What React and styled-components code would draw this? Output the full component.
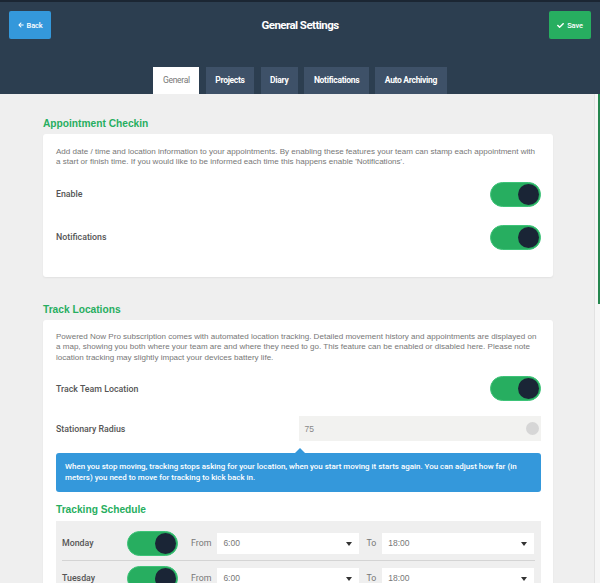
import React from 'react';
import styled, { createGlobalStyle } from 'styled-components';
import { FaArrowLeft, FaCheck } from 'react-icons/fa';

const GlobalStyle = createGlobalStyle`
  html, body {
    margin: 0;
    padding: 0;
    height: 100%;
    overflow: hidden;
  }
  body {
    font-family: "Liberation Sans", Arial, sans-serif;
    background: #efefef;
  }
  #root {
    height: 100%;
  }
`;

const Screen = styled.div`
  height: 100vh;
  display: flex;
  flex-direction: column;
`;

const Header = styled.header`
  flex: none;
  height: 94px;
  box-sizing: border-box;
  background: #2c3e50;
  border-top: 2px solid #1b2633;
  padding: 9px 9px 0;
  display: flex;
  flex-direction: column;
  font-family: Roboto, sans-serif;
`;

const TopBar = styled.div`
  display: flex;
  align-items: center;
  justify-content: space-between;
  height: 28px;
`;

const HeaderButton = styled.button`
  width: 42px;
  height: 28px;
  border: none;
  border-radius: 2px;
  background: ${(p) => p.$color};
  color: #fff;
  font-family: Roboto, sans-serif;
  font-size: 7.5px;
  font-weight: 500;
  letter-spacing: -0.2px;
  display: flex;
  align-items: center;
  justify-content: center;
  gap: 3px;
  padding: 0;
`;

const Title = styled.h1`
  margin: 0;
  color: #fff;
  font-size: 11.5px;
  font-weight: 700;
  letter-spacing: -0.55px;
`;

const Tabs = styled.nav`
  display: flex;
  justify-content: center;
  gap: 6.5px;
  margin-top: 28px;
  height: 27px;
`;

const Tab = styled.div`
  padding: 0 9.5px 2px;
  display: flex;
  align-items: center;
  background: ${(p) => (p.$active ? '#fff' : '#3e5168')};
  color: ${(p) => (p.$active ? '#777' : '#fff')};
  font-size: 8.5px;
  font-weight: ${(p) => (p.$active ? 400 : 700)};
  letter-spacing: -0.3px;
`;

const Body = styled.div`
  flex: 1;
  min-height: 0;
  position: relative;
`;

const Main = styled.main`
  height: 100%;
  overflow-y: auto;
  padding: 0 6px 0 2px;
  box-sizing: border-box;

  &::-webkit-scrollbar {
    display: none;
  }
`;

const ScrollRail = styled.div`
  position: absolute;
  top: 0;
  right: 0;
  bottom: 0;
  width: 6px;
  box-sizing: border-box;
  background: #f6f6f6;
  border-left: 1px solid #e2e2e2;
  display: flex;
  justify-content: flex-end;
`;

const ScrollThumb = styled.div`
  width: 2.5px;
  height: 210px;
  background: #26874f;
`;

const Container = styled.div`
  width: 510px;
  margin: 0 auto;
  padding-bottom: 40px;
`;

const Section = styled.section`
  margin-top: ${(p) => p.$top || 26}px;
`;

const SectionTitle = styled.h2`
  margin: 0 0 3px;
  color: #27ae60;
  font-size: 10.2px;
  line-height: 14px;
  font-weight: 700;
`;

const SubTitle = styled(SectionTitle)`
  margin: 11.5px 0 4px;
`;

const Card = styled.div`
  background: #fff;
  border-radius: 3px;
  box-shadow: 0 1px 2px rgba(0, 0, 0, 0.06);
  padding: ${(p) => p.$top || 13}px 14px ${(p) => p.$bottom || 18}px 13px;
`;

const Description = styled.p`
  margin: 0 0 ${(p) => p.$gap || 4}px;
  color: #777;
  font-size: 8.05px;
  line-height: 10.4px;
`;

const SettingRow = styled.div`
  display: flex;
  align-items: center;
  justify-content: space-between;
  height: 43px;
  margin-right: -2px;
`;

const Label = styled.span`
  color: #555;
  font-family: Roboto, sans-serif;
  font-size: 8.8px;
  font-weight: 500;
`;

const ToggleTrack = styled.span`
  flex: none;
  width: 51px;
  height: 25px;
  box-sizing: border-box;
  border-radius: 13px;
  background: ${(p) => (p.$on ? '#27ae60' : '#ccc')};
  border: 1px solid ${(p) => (p.$on ? '#3dc378' : '#bbb')};
  display: flex;
  align-items: center;
  justify-content: ${(p) => (p.$on ? 'flex-end' : 'flex-start')};
  padding: 0 1px;
`;

const Knob = styled.span`
  width: 21px;
  height: 21px;
  border-radius: 50%;
  background: #1a2536;
`;

const Toggle = ({ on = true }) => (
  <ToggleTrack $on={on}>
    <Knob />
  </ToggleTrack>
);

const Block = styled.div`
  margin-right: -2px;
`;

const RadiusRow = styled.div`
  display: grid;
  grid-template-columns: 1fr 1fr;
  align-items: center;
  padding-top: 6px;
`;

const InputBox = styled.div`
  height: 25px;
  background: #f2f2f0;
  display: flex;
  align-items: center;
  justify-content: space-between;
  padding: 0 2px 0 6px;
  color: #888;
  font-size: 8.5px;
`;

const ClearDot = styled.span`
  width: 13px;
  height: 13px;
  border-radius: 50%;
  background: #d6d6d6;
`;

const Hint = styled.div`
  position: relative;
  margin-top: 12px;
  background: #3498db;
  color: #fff;
  border-radius: 3px;
  padding: 9px 9px 8px;
  font-family: Roboto, sans-serif;
  font-size: 7.95px;
  font-weight: 500;
  line-height: 10.8px;

  &::before {
    content: '';
    position: absolute;
    left: 50%;
    top: -5px;
    margin-left: -4px;
    border-left: 5px solid transparent;
    border-right: 5px solid transparent;
    border-bottom: 5px solid #3498db;
  }
`;

const ScheduleBox = styled.div`
  background: #efefef;
  padding: 5px 0 6px;
`;

const DayRow = styled.div`
  display: flex;
  align-items: center;
  height: 34px;
  margin: 0 6px;
  border-bottom: ${(p) => (p.$last ? 'none' : '1px solid #d4d4d4')};
`;

const DayName = styled.span`
  width: 65px;
  color: #555;
  font-family: Roboto, sans-serif;
  font-size: 8.8px;
  font-weight: 500;
`;

const FieldLabel = styled.span`
  margin: 0 6px 0 ${(p) => p.$gap}px;
  color: #777;
  font-family: Roboto, sans-serif;
  font-size: 8.8px;
`;

const Select = styled.div`
  ${(p) => (p.$width ? `width: ${p.$width}px; flex: none;` : 'flex: 1;')}
  height: 21px;
  box-sizing: border-box;
  background: #fff;
  display: flex;
  align-items: center;
  justify-content: space-between;
  padding: 0 7px 0 6px;
  color: #777;
  font-size: 8.5px;
  margin-right: ${(p) => (p.$width ? 0 : 1)}px;
`;

const Caret = styled.span`
  border-left: 3.5px solid transparent;
  border-right: 3.5px solid transparent;
  border-top: 4px solid #333;
  margin-top: 2px;
`;

const days = [
  { name: 'Monday', on: true },
  { name: 'Tuesday', on: true },
  { name: 'Wednesday', on: true },
  { name: 'Thursday', on: true },
  { name: 'Friday', on: true },
  { name: 'Saturday', on: false },
  { name: 'Sunday', on: false },
];

const tabs = ['General', 'Projects', 'Diary', 'Notifications', 'Auto Archiving'];

export default function App() {
  return (
    <>
      <GlobalStyle />
      <Screen>
        <Header>
          <TopBar>
            <HeaderButton $color="#3498db">
              <FaArrowLeft size={6} /> Back
            </HeaderButton>
            <Title>General Settings</Title>
            <HeaderButton $color="#27ae60">
              <FaCheck size={7} /> Save
            </HeaderButton>
          </TopBar>
          <Tabs>
            {tabs.map((t, i) => (
              <Tab key={t} $active={i === 0}>
                {t}
              </Tab>
            ))}
          </Tabs>
        </Header>

        <Body>
          <Main>
            <Container>
              <Section $top={23}>
                <SectionTitle>Appointment Checkin</SectionTitle>
                <Card>
                  <Description $gap={5}>
                    Add date / time and location information to your appointments. By enabling
                    these features your team can stamp each appointment with a start or finish
                    time. If you would like to be informed each time this happens enable
                    'Notifications'.
                  </Description>
                  <SettingRow>
                    <Label>Enable</Label>
                    <Toggle />
                  </SettingRow>
                  <SettingRow>
                    <Label>Notifications</Label>
                    <Toggle />
                  </SettingRow>
                </Card>
              </Section>

              <Section>
                <SectionTitle>Track Locations</SectionTitle>
                <Card $top={12} $bottom={14}>
                  <Description>
                    Powered Now Pro subscription comes with automated location tracking. Detailed
                    movement history and appointments are displayed on a map, showing you both
                    where your team are and where they need to go. This feature can be enabled or
                    disabled here. Please note location tracking may slightly impact your devices
                    battery life.
                  </Description>
                  <SettingRow>
                    <Label>Track Team Location</Label>
                    <Toggle />
                  </SettingRow>
                  <Block>
                    <RadiusRow>
                      <Label>Stationary Radius</Label>
                      <InputBox>
                        75
                        <ClearDot />
                      </InputBox>
                    </RadiusRow>
                    <Hint>
                      When you stop moving, tracking stops asking for your location, when you start
                      moving it starts again. You can adjust how far (in meters) you need to move
                      for tracking to kick back in.
                    </Hint>
                    <SubTitle>Tracking Schedule</SubTitle>
                    <ScheduleBox>
                      {days.map((d, i) => (
                        <DayRow key={d.name} $last={i === days.length - 1}>
                          <DayName>{d.name}</DayName>
                          <Toggle on={d.on} />
                          <FieldLabel $gap={13}>From</FieldLabel>
                          <Select $width={142}>
                            6:00
                            <Caret />
                          </Select>
                          <FieldLabel $gap={7}>To</FieldLabel>
                          <Select>
                            18:00
                            <Caret />
                          </Select>
                        </DayRow>
                      ))}
                    </ScheduleBox>
                  </Block>
                </Card>
              </Section>
            </Container>
          </Main>
          <ScrollRail>
            <ScrollThumb />
          </ScrollRail>
        </Body>
      </Screen>
    </>
  );
}
